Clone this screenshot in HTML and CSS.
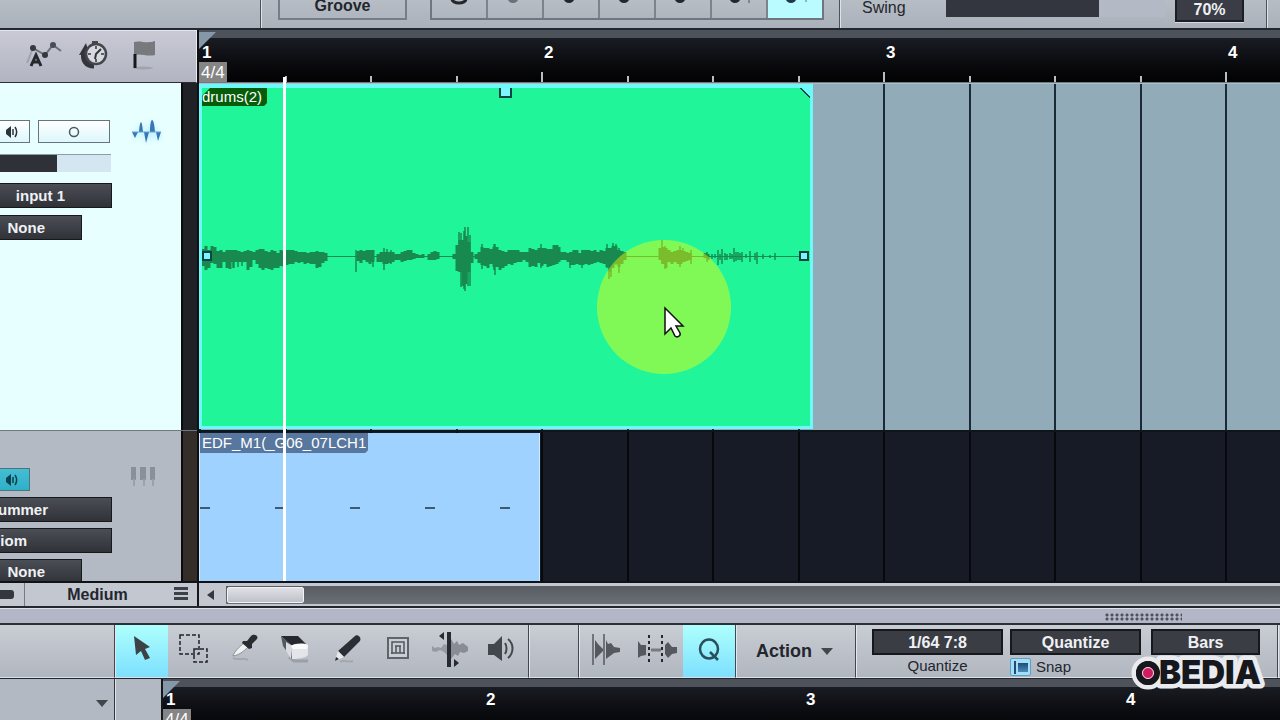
FILE: index.html
```html
<!DOCTYPE html>
<html lang="en">

<head>
    <meta charset="UTF-8" />
    <title>Arranger</title>
    <link rel="stylesheet" href="styles.css">
</head>

<body>

    <!-- Quantize bar -->
    <header class="topbar">
        <div class="top-section top-left"></div>
        <div class="top-section top-groove">
            <button class="groove-button">Groove</button>
            <div class="note-group">
                <button aria-label="Whole"><svg width="24" height="28" viewBox="0 0 24 28"><ellipse cx="12" cy="9" rx="7" ry="4" fill="none" stroke="#23262d" stroke-width="3" /></svg></button>
                <button aria-label="Half"><svg width="24" height="28" viewBox="0 0 24 28"><ellipse cx="10" cy="9" rx="5" ry="4" fill="#6b7078" /></svg></button>
                <button aria-label="Quarter"><svg width="24" height="28" viewBox="0 0 24 28"><ellipse cx="10" cy="9" rx="5" ry="4" fill="#23262d" /></svg></button>
                <button aria-label="Eighth"><svg width="24" height="28" viewBox="0 0 24 28"><ellipse cx="9" cy="9" rx="5" ry="4" fill="#23262d" /></svg></button>
                <button aria-label="Sixteenth"><svg width="24" height="28" viewBox="0 0 24 28"><ellipse cx="9" cy="9" rx="5" ry="4" fill="#23262d" /></svg></button>
                <button aria-label="Thirty-second"><svg width="24" height="28" viewBox="0 0 24 28"><ellipse cx="8" cy="9" rx="5" ry="4" fill="#23262d" /><path d="M22 6V13" stroke="#80858e" stroke-width="2" /></svg></button>
                <button class="active" aria-label="Sixty-fourth"><svg width="24" height="28" viewBox="0 0 24 28"><ellipse cx="8" cy="9" rx="5" ry="4" fill="#1d3a48" /><path d="M23 6V12" stroke="#7fbcc6" stroke-width="2" /></svg></button>
            </div>
        </div>
        <div class="top-section top-swing">
            <label for="swing">Swing</label>
            <input class="slider swing-slider" id="swing" type="range" min="0" max="100" value="70">
            <button class="swing-value">70%</button>
        </div>
        <div class="top-section top-rest"></div>
    </header>

    <main class="arranger">

        <!-- Track list -->
        <section class="tracklist">
            <div class="tracklist-header">
                <button class="icon-button" aria-label="Automation">
                    <svg width="36" height="30" viewBox="0 0 36 30">
                        <path d="M7 8L19 15L27 5L35 11" fill="none" stroke="#6c6f77" stroke-width="2" />
                        <path d="M1 23L7 8" stroke="#a0a3ad" stroke-width="2" />
                        <circle cx="7" cy="8" r="3" fill="#35383e" /><circle cx="19" cy="15" r="3" fill="#35383e" /><circle cx="27" cy="5" r="3" fill="#4a4d54" />
                        <path d="M5 26L10 15L15 26M7 22H13" fill="none" stroke="#26282d" stroke-width="3" />
                    </svg>
                </button>
                <button class="icon-button" aria-label="Tempo">
                    <svg width="30" height="30" viewBox="0 0 30 30">
                        <path d="M16 26C8 26 4 20 6 12" fill="none" stroke="#33353a" stroke-width="5" />
                        <path d="M1 15L8 3L11 14Z" fill="#33353a" />
                        <rect x="14" y="1" width="6" height="3" fill="#44474d" />
                        <circle cx="18" cy="14" r="10" fill="#d6d9df" stroke="#44464c" stroke-width="2.500" />
                        <path d="M18 6V9M18 19V22M10 14H13M23 14H26" stroke="#33353a" stroke-width="1.500" fill="none" />
                        <path d="M23 9L18 14L17 19" stroke="#33353a" stroke-width="2" fill="none" />
                    </svg>
                </button>
                <button class="icon-button" aria-label="Marker">
                    <svg width="28" height="32" viewBox="0 0 28 32">
                        <ellipse cx="13" cy="29" rx="10" ry="1.500" fill="#a0a3ad" />
                        <path d="M4 3C10 1 17 5 25 2V16C17 18 11 14 4 16Z" fill="#77797d" />
                        <path d="M5 15V29" stroke="#17181b" stroke-width="3" />
                    </svg>
                </button>
            </div>

            <div class="track track-audio selected">
                <div class="track-controls">
                    <div class="track-row">
                        <button class="mini monitor" aria-label="Monitor">
                            <svg width="14" height="12" viewBox="0 0 14 12"><path d="M1 4L6 0V12L1 8Z" fill="#2b3338" /><path d="M8 3V9M10 1C12 4 12 8 10 11" fill="none" stroke="#2b3338" stroke-width="1.500" /></svg>
                        </button>
                        <button class="mini channel-mode" aria-label="Mono">
                            <svg width="12" height="12" viewBox="0 0 12 12"><circle cx="6" cy="6" r="4.500" fill="none" stroke="#4b575c" stroke-width="1.500" /></svg>
                        </button>
                        <svg class="track-icon" width="32" height="28" viewBox="0 0 32 28">
                            <path class="glow" d="M1 15H7L10 5L13 15L15 23L20 2L24 15H30L27 23L22 13L16 25L10 13L4 21Z" />
                            <path d="M1 14H7L4 20ZM8 14C9 1 11 1 12 14ZM13 14H18L15 25ZM19 14C19 -2 23 -2 24 14ZM25 14H30L27 23Z" fill="#3977b4" />
                            <path d="M1 14H30" stroke="#6ba6d4" stroke-width="1" />
                        </svg>
                    </div>
                    <input class="slider track-fader" type="range" aria-label="Volume" min="0" max="100" value="51">
                    <button class="field field-input">input 1</button>
                    <button class="field field-short">None</button>
                </div>
                <div class="meter"></div>
            </div>

            <div class="track track-instrument">
                <div class="track-controls">
                    <div class="track-row">
                        <button class="mini monitor on" aria-label="Monitor">
                            <svg width="14" height="12" viewBox="0 0 14 12"><path d="M1 4L6 0V12L1 8Z" fill="#0c414e" /><path d="M8 3V9M10 1C12 4 12 8 10 11" fill="none" stroke="#0c414e" stroke-width="1.500" /></svg>
                        </button>
                        <svg class="track-icon keys-icon" width="28" height="28" viewBox="0 0 28 28">
                            <path d="M1 1H6V14H1ZM10 1H16V14H10ZM20 1H25V14H20Z" fill="#8b9098" />
                            <path d="M4 13V20M14 13V20M23 13V20" stroke="#9da2aa" stroke-width="2" />
                        </svg>
                    </div>
                    <button class="field field-drummer">ummer</button>
                    <button class="field field-sound">iom</button>
                    <button class="field field-short">None</button>
                </div>
                <div class="meter"></div>
            </div>
        </section>

        <!-- Timeline -->
        <section class="timeline">
            <div class="ruler">
                <div class="bar"><span>1</span><i></i><i></i><i></i><i></i></div>
                <div class="bar"><span>2</span><i></i><i></i><i></i><i></i></div>
                <div class="bar"><span>3</span><i></i><i></i><i></i><i></i></div>
                <div class="bar"><span>4</span><i></i><i></i><i></i><i></i></div>
                <div class="song-start"></div>
                <div class="signature">4/4</div>
            </div>

            <div class="lane lane-audio">
                <div class="grid-bar"><i></i><i></i><i></i><i></i></div>
                <div class="grid-bar"><i></i><i></i><i></i><i></i></div>
                <div class="grid-bar"><i></i><i></i><i></i><i></i></div>
                <div class="grid-bar"><i></i><i></i><i></i><i></i></div>
                <div class="clip clip-drums">
                    <div class="clip-name">drums(2)</div>
                    <svg class="waveform" width="607" height="70" viewBox="202 222 607 70">
                        <path d="M202 256.500H809" stroke-width="1" />
                        <path stroke-width="3" d="M203 249V266M206 246V270M209 250V268M212 246V263M215 247V264M218 251V268M221 250V268M224 252V262M227 250V268M230 250V269M233 250V262M236 250V262M239 251V262M242 252V262M245 251V262M248 250V270M251 251V267M254 252V260M257 250V264M260 249V268M263 249V270M266 251V268M269 252V269M272 250V270M275 251V268M278 253V268M281 250V266M284 251V267M287 250V265M290 250V264M293 250V264M296 251V262M299 252V263M302 252V262M305 252V264M308 253V263M311 252V264M314 252V264M317 251V268M320 252V267M323 252V263M326 253V261M358 251V261M361 250V263M364 251V260M367 250V262M370 250V264M373 250V262M378 254V262M381 252V262M384 252V264M387 252V264M390 252V263M393 252V262M396 254V260M399 254V260M402 252V262M405 251V261M408 250V260M411 250V260M414 253V259M417 254V258M420 255V258M423 254V258M429 254V260M432 252V260M435 251V260M438 252V259M454 254V259M457 245V271M460 240V272M463 240V286M466 236V284M469 242V272M472 252V263M476 254V259M479 252V263M482 247V265M485 248V266M488 248V268M491 249V264M494 247V267M497 247V267M500 250V270M503 251V268M506 252V266M509 250V264M512 250V265M515 250V263M518 250V262M521 252V262M524 252V260M527 252V262M530 248V267M533 249V266M536 250V267M539 248V263M542 248V266M545 248V264M548 249V267M551 249V266M554 245V265M557 245V264M559 247V262M562 252V260M565 252V260M568 253V262M571 252V265M574 250V265M577 250V264M580 253V265M583 250V265M586 250V264M589 250V265M592 251V264M595 250V263M598 252V262M601 250V263M604 251V264M607 248V267M610 248V272M613 246V268M616 246V264M619 250V267M622 251V264M625 252V260M660 248V260M663 247V264M666 248V268M669 250V262M672 252V264M675 251V262M678 250V264M681 250V264M684 251V262M687 252V261M690 253V260M705 253V258M708 254V260" />
                        <path stroke-width="1.500" d="M234 256V268M238 256V267M242 256V266M233 250V268M356 250V272M373 250V267M384 248V270M387 249V264M391 250V264M459 232V272M461 233V287M464 231V289M465 227V291M468 227V286M470 235V286M482 244V269M494 244V270M495 244V275M541 244V268M570 252V268M582 250V268M607 244V268M609 248V279M611 248V277M613 243V268M616 244V265M619 248V273M662 240V264M665 246V269M680 246V267M683 248V262M691 250V264M707 252V262M718 250V265M720 254V260M722 249V264M725 253V260M727 254V260M730 253V259M732 254V259M734 248V262M736 252V261M738 252V260M740 253V260M742 252V262M746 254V258M750 251V262M755 253V260M757 252V264M763 254V259M770 255V258M775 253V260M712 254V259M715 254V258" />
                    </svg>
                    <i class="handle handle-top"></i>
                    <i class="handle handle-left"></i>
                    <i class="handle handle-right"></i>
                    <i class="fade"></i>
                </div>
            </div>

            <div class="lane lane-instrument">
                <div class="grid-bar"><i></i><i></i><i></i><i></i></div>
                <div class="grid-bar"><i></i><i></i><i></i><i></i></div>
                <div class="grid-bar"><i></i><i></i><i></i><i></i></div>
                <div class="grid-bar"><i></i><i></i><i></i><i></i></div>
                <div class="clip clip-midi">
                    <div class="clip-name">EDF_M1(_G06_07LCH1</div>
                    <div class="midi-notes"><i></i><i></i><i></i><i></i><i></i></div>
                </div>
            </div>

            <div class="playhead"></div>
            <div class="click-spot"></div>
            <svg class="cursor" width="22" height="34" viewBox="0 0 22 34"><path d="M2 2V28L8 22L12 30C14 32 18 30 17 27L13 20H20Z" fill="#fff" stroke="#111" stroke-width="1.500" /></svg>
        </section>
    </main>

    <!-- Track size + horizontal scroll -->
    <div class="scrollrow">
        <div class="track-size">
            <div class="zoom-pill"><i></i></div>
            <button class="size-button">Medium</button>
            <button class="menu-button" aria-label="Track menu"><i></i><i></i><i></i></button>
        </div>
        <div class="scroll">
            <button class="scroll-left" aria-label="Scroll left"></button>
            <div class="scroll-track"><div class="scroll-thumb"></div></div>
        </div>
    </div>

    <div class="splitter"><div class="grip"></div></div>

    <!-- Editor toolbar -->
    <div class="toolbar">
        <div class="tool-section tools-left"></div>
        <div class="tool-section tools-main">
            <button class="tool active" aria-label="Arrow">
                <svg width="32" height="32" viewBox="0 0 32 32"><path d="M8 3L24 14L19 16L24 25L19 27L15 18L10 22Z" fill="#3d4244" /></svg>
            </button>
            <button class="tool" aria-label="Range">
                <svg width="32" height="32" viewBox="0 0 32 32"><path d="M3 2H22V21H3ZM17 16H30V29H17Z" fill="none" stroke="#202329" stroke-width="1.500" stroke-dasharray="4 2" /></svg>
            </button>
            <button class="tool" aria-label="Split">
                <svg width="32" height="32" viewBox="0 0 32 32"><path d="M4 25C9 28 14 24 19 27" stroke="#a2a7af" stroke-width="2" fill="none" /><path d="M4 23C5 19 10 14 15 10L19 14C14 19 10 22 4 23Z" fill="#f1f2f4" stroke="#8b9097" /><path d="M14 8L18 8L22 3C25 0 30 3 28 6L23 11L23 15L20 16L13 10Z" fill="#292c31" /></svg>
            </button>
            <button class="tool" aria-label="Eraser">
                <svg width="32" height="32" viewBox="0 0 32 32"><path d="M9 24L14 28H28" stroke="#9b9fa8" stroke-width="3" fill="none" /><path d="M1 3H18L27 12H11Z" fill="#25282d" /><path d="M1 3L11 12L12 26L3 13Z" fill="#55595f" /><path d="M6 9L11 12V26L6 18Z" fill="#d8dbe0" /><path d="M11 13C15 11 24 10 28 12V22C26 25 17 26 12 26Z" fill="#e2e5e9" /><path d="M11 13C15 10 24 10 28 12L27 16H13Z" fill="#fafafa" /></svg>
            </button>
            <button class="tool" aria-label="Paint">
                <svg width="32" height="32" viewBox="0 0 32 32"><path d="M8 29C12 26 16 30 21 28" stroke="#a2a7af" stroke-width="2" fill="none" /><path d="M23 3C25 1 30 4 28 8L12 24L6 18Z" fill="#2b2e34" /><path d="M6 18L12 24L3 28Z" fill="#e9eaec" /><path d="M3 28L4 24L7 26Z" fill="#25282d" /></svg>
            </button>
            <button class="tool" aria-label="Mute">
                <svg width="32" height="32" viewBox="0 0 32 32"><path d="M5 5H25V25H5Z" fill="#c9cdd4" stroke="#5f636b" stroke-width="2" /><path d="M9 21V9H21V21M13 20V13M17 20V13M8 20H22M12 13H18" fill="none" stroke="#52565e" stroke-width="1.500" /></svg>
            </button>
            <button class="tool" aria-label="Bend">
                <svg width="40" height="38" viewBox="0 0 40 38"><path d="M1 16L4 18L7 17L10 18L13 14L16 15V25L13 22L9 20L5 22L1 21Z" fill="#969aa2" /><path d="M20 9L23 14L26 11L28 15L32 13L37 17V21L33 23L29 22L27 26L24 24L20 29Z" fill="#888c95" /><path d="M18 2V37" stroke="#272a30" stroke-width="4" /><path d="M13 2V10L8 6ZM23 29V37L28 33Z" fill="#272a30" /></svg>
            </button>
            <button class="tool" aria-label="Listen">
                <svg width="32" height="32" viewBox="0 0 32 32"><path d="M2 11H8L16 3V28L8 22H2Z" fill="#42464d" /><path d="M19 10C21 13 21 18 19 21M22 6C28 11 28 20 22 25" stroke="#42464d" stroke-width="2" fill="none" /></svg>
            </button>
        </div>
        <div class="tool-section tools-gap"></div>
        <div class="tool-section tools-edit">
            <button class="tool" aria-label="Transients">
                <svg width="32" height="34" viewBox="0 0 32 34"><path d="M3 2V33M14 2V33" stroke="#55595f" stroke-width="1.500" /><path d="M5 8L8 12L13 17V19L9 23L5 27ZM16 8L18 12L21 11L24 15L30 16V20L24 21L20 24L16 27Z" fill="#55595f" /></svg>
            </button>
            <button class="tool" aria-label="Slice">
                <svg width="42" height="34" viewBox="0 0 42 34"><path d="M1 9L4 13L9 13V23L4 24L1 26ZM28 13L31 10L35 15H40V21L35 22L31 26L28 22Z" fill="#55595f" /><path d="M14 18H24" stroke="#767a82" stroke-width="3" /><path d="M12 3V33M25 3V33" stroke="#24272b" stroke-width="2" stroke-dasharray="3 3" /></svg>
            </button>
            <button class="tool active" aria-label="Quantize panel">
                <svg width="28" height="28" viewBox="0 0 28 28"><ellipse cx="14" cy="14" rx="9" ry="9.500" fill="none" stroke="#284f5c" stroke-width="2.500" /><path d="M15 17L23 25" stroke="#284f5c" stroke-width="2.500" /></svg>
            </button>
        </div>
        <div class="tool-section tools-action">
            <button class="action-button">Action <i class="arrow-down"></i></button>
        </div>
        <div class="tool-section tools-quantize">
            <div class="param">
                <button class="field" id="quantize-value">1/64 7:8</button>
                <label for="quantize-value">Quantize</label>
            </div>
            <div class="param">
                <button class="field">Quantize</button>
                <label class="snap"><input type="checkbox" checked>Snap</label>
            </div>
            <div class="param param-bars">
                <button class="field" id="timebase">Bars</button>
                <label for="timebase">Timebase</label>
            </div>
            <svg class="logo" width="144" height="40" viewBox="0 0 144 40">
                <g class="logo-back">
                    <circle cx="20" cy="20" r="12" />
                    <text x="31" y="31">BEDIA</text>
                </g>
                <circle cx="20" cy="20" r="9" fill="#cf1c63" stroke="#17181d" stroke-width="6" />
                <circle cx="20" cy="20" r="5.500" fill="none" stroke="#f3dfe8" stroke-width="1" />
            </svg>
        </div>
        <div class="tool-section tools-rest"></div>
    </div>

    <!-- Editor -->
    <div class="editor">
        <div class="editor-head"><i class="arrow-down"></i></div>
        <div class="editor-keys"></div>
        <div class="ruler editor-ruler">
            <div class="bar"><span>1</span></div>
            <div class="bar"><span>2</span></div>
            <div class="bar"><span>3</span></div>
            <div class="bar"><span>4</span></div>
            <div class="song-start"></div>
            <div class="signature">4/4</div>
        </div>
    </div>

</body>

</html>
```
FILE: styles.css
```css
* {
    box-sizing: border-box;
}

body {
    margin: 0;
    height: 100vh;
    overflow: hidden;
    display: flex;
    flex-direction: column;
    background: #b3b9c2;
    color: #23262d;
    font-family: "Liberation Sans", Arial, sans-serif;
    font-size: 16px;
}

button {
    font: inherit;
    color: inherit;
    padding: 0;
    margin: 0;
    border: none;
    background: none;
    display: flex;
    align-items: center;
    justify-content: center;
    flex: none;
}

svg {
    display: block;
    flex: none;
}

/* Quantize bar */
.topbar {
    display: flex;
    flex: none;
    height: 30px;
    overflow: hidden;
    background: linear-gradient(#b7bdc5, #abb1ba);
    border-bottom: 2px solid #23282e;
}

.top-section {
    display: flex;
    align-items: flex-end;
    flex: none;
    padding-bottom: 8px;
    border-right: 1px solid #4d5259;
    box-shadow: 1px 0 0 #dfe3e8;
}

.top-left {
    width: 261px;
}

.top-groove {
    width: 579px;
    padding-left: 17px;
    gap: 23px;
}

.groove-button {
    width: 129px;
    height: 28px;
    border: 2px solid #777c85;
    font-weight: bold;
}

.note-group {
    display: flex;
    border: 2px solid #70757e;
}

.note-group button {
    width: 56px;
    height: 28px;
    border-right: 2px solid #7d828b;
}

.note-group button:last-child {
    width: 54px;
    border-right: none;
}

.note-group .active {
    background: #b9fbff;
}

.top-swing {
    width: 427px;
    padding-left: 22px;
}

.top-swing label {
    width: 84px;
    line-height: 24px;
}

.slider {
    appearance: none;
    margin: 0;
    border-radius: 0;
    flex: none;
}

.slider::-webkit-slider-thumb {
    appearance: none;
    width: 1px;
    height: 1px;
    opacity: 0;
}

.swing-slider {
    width: 219px;
    height: 28px;
    margin-bottom: 3px;
    background: linear-gradient(90deg, #33363e 70%, #b3bac5 70%);
}

.swing-value {
    width: 69px;
    height: 24px;
    margin-left: 10px;
    margin-bottom: -2px;
    border: 2px solid #1c1e23;
    box-shadow: 0 1px 0 #d7dbe0;
    background: #3a3d45;
    color: #eef0f3;
    font-weight: bold;
}

.top-rest {
    flex: 1;
    border-right: none;
}

/* Arranger */
.arranger {
    display: flex;
    flex: none;
}

.tracklist {
    flex: none;
    width: 199px;
    border-right: 2px solid #0d0f13;
}

.tracklist-header {
    display: flex;
    align-items: center;
    height: 53px;
    padding: 0 0 4px 26px;
    gap: 16px;
    background: linear-gradient(#c9cad6, #b2b4c1);
    border-top: 1px solid #e3e6ec;
    border-bottom: 1px solid #2a2e34;
    border-right: 1px solid #e9ebf0;
}

.icon-button:last-child {
    margin-left: 6px;
}

.track {
    display: flex;
    overflow: hidden;
}

.track-audio {
    height: 347px;
    background: #e8ffff;
}

.track-instrument {
    height: 151px;
    background: #b3bac3;
    border-top: 1px solid #71777f;
}

.track-controls {
    flex: 1;
    display: flex;
    flex-direction: column;
    align-items: flex-start;
    gap: 7px;
    padding-top: 37px;
}

.track-instrument .track-controls {
    gap: 6px;
}

.meter {
    flex: none;
    width: 16px;
    background: #202127;
    border-left: 2px solid #0a0b0e;
}

.track-instrument .meter {
    background: #352d28;
}

.track-row {
    display: flex;
    align-items: center;
    height: 23px;
}

.mini {
    height: 23px;
    border: 1px solid #66757b;
    background: linear-gradient(#fff, #dcf7fc);
}

.monitor {
    width: 30px;
    padding-right: 5px;
    border-left: none;
}

.monitor.on {
    background: linear-gradient(#45bdd2, #2fb0c8);
    border-color: #4a7580;
}

.channel-mode {
    width: 72px;
    margin-left: 8px;
}

.track-icon {
    margin-left: 21px;
}

.keys-icon {
    margin-left: 100px;
}

.glow {
    fill: #a6e6ff;
    filter: blur(3px);
}

.track-fader {
    width: 111px;
    height: 18px;
    margin: 4px 0;
    border-top: 1px solid #8e9ca3;
    background: linear-gradient(90deg, #2e3138 51%, #d4e6f2 51%);
}

.field {
    height: 25px;
    border: 1px solid #17181c;
    background: linear-gradient(#4a4e55, #303238);
    color: #f0f1f4;
    font-size: 15px;
    font-weight: bold;
}

.track .field {
    width: 112px;
    border-left: none;
    justify-content: flex-end;
}

.track .field-input {
    padding-right: 46px;
}

.track .field-short {
    width: 82px;
    padding-right: 36px;
}

.track .field-drummer {
    padding-right: 63px;
}

.track .field-sound {
    padding-right: 84px;
}

/* Timeline */
.timeline {
    flex: 1;
    min-width: 0;
    position: relative;
    overflow: hidden;
}

.ruler {
    display: flex;
    position: relative;
    height: 53px;
    overflow: hidden;
    background: linear-gradient(#4d525b 8px, #191c23 8px, #0b0c10 32px, #020203);
    border-bottom: 1px solid #6d7a82;
}

.bar {
    flex: none;
    width: 342px;
    display: flex;
    align-items: flex-end;
    position: relative;
}

.bar span {
    position: absolute;
    left: 3px;
    top: 14px;
    line-height: 18px;
    font-size: 17px;
    font-weight: bold;
    color: #fff;
    z-index: 1;
}

.bar i {
    flex: 1;
    height: 6px;
    border-left: 2px solid #b9bcc0;
}

.bar i:first-of-type {
    height: 10px;
}

.song-start {
    position: absolute;
    left: 0;
    top: 2px;
    width: 17px;
    height: 17px;
    background: #8697a8;
    clip-path: polygon(0 0, 100% 0, 0 100%);
}

.signature {
    position: absolute;
    left: 0;
    bottom: 0;
    padding: 0 2px;
    width: 28px;
    height: 20px;
    line-height: 22px;
    font-size: 17px;
    color: #fff;
    background: #858585;
}

.lane {
    display: flex;
    position: relative;
    overflow: hidden;
}

.lane-audio {
    height: 347px;
    background: #92abb8;
    border-top: 1px solid #a9c0cb;
}

.lane-instrument {
    height: 151px;
    background: #171b25;
    border-top: 2px solid #10151b;
}

.grid-bar {
    flex: none;
    width: 342px;
    display: flex;
}

.grid-bar i {
    flex: 1;
    border-left: 2px solid #1c2a35;
}

.lane-instrument .grid-bar i {
    border-color: #07080c;
}

.clip {
    position: absolute;
    left: 0;
}

.clip-drums {
    top: 0;
    width: 614px;
    height: 345px;
    border: 3px solid #6df8fa;
    border-top-width: 4px;
    background: #20f59a;
}

.clip-midi {
    top: 1px;
    bottom: 0;
    width: 341px;
    border-left: 1px solid #cfeaff;
    border-right: 1px solid #cfeaff;
    background: #9fd2ff;
}

.clip-name {
    width: max-content;
    line-height: 18px;
    font-size: 15px;
    color: #fff;
}

.clip-drums .clip-name {
    padding-right: 5px;
    background: #065c08;
    clip-path: polygon(8px 0, 100% 0, 100% 15px, calc(100% - 3px) 100%, 0 100%, 0 8px);
}

.clip-midi .clip-name {
    padding: 0 2px;
    line-height: 20px;
    background: #58779f;
    clip-path: polygon(0 0, 100% 0, 100% 17px, calc(100% - 3px) 100%, 0 100%);
}

.waveform {
    position: absolute;
    left: 0;
    top: 134px;
    stroke: #188a50;
    fill: none;
}

.handle {
    position: absolute;
    width: 10px;
    height: 10px;
    border: 2px solid #08463f;
    background: #7df5ff;
}

.handle-top {
    left: 297px;
    top: 0;
    width: 13px;
    border-top: none;
}

.handle-left {
    left: 0;
    top: 163px;
}

.handle-right {
    right: 1px;
    top: 163px;
}

.fade {
    position: absolute;
    right: 0;
    top: 0;
    width: 10px;
    height: 10px;
    background: linear-gradient(45deg, transparent 46%, #08463f 46%, #08463f 56%, #6df8fa 56%);
}

.midi-notes {
    display: flex;
    gap: 65px;
    padding-top: 54px;
}

.midi-notes i {
    width: 10px;
    height: 2px;
    background: #3c5a70;
}

.playhead {
    position: absolute;
    left: 84px;
    top: 47px;
    bottom: 0;
    width: 3px;
    background: #fff;
}

.click-spot {
    position: absolute;
    left: 398px;
    top: 210px;
    width: 134px;
    height: 134px;
    border-radius: 50%;
    background: rgba(255, 255, 0, .43);
}

.cursor {
    position: absolute;
    left: 464px;
    top: 276px;
}

/* Track size + scroll */
.scrollrow {
    display: flex;
    flex: none;
    height: 27px;
    border-top: 2px solid #101216;
    border-bottom: 2px solid #24282e;
    background: #c3c7d0;
}

.track-size {
    display: flex;
    flex: none;
    width: 199px;
    border-right: 2px solid #15171b;
}

.zoom-pill {
    display: flex;
    align-items: center;
    width: 25px;
    border-right: 1px solid #767b84;
}

.zoom-pill i {
    width: 14px;
    height: 9px;
    background: #34373d;
    border-radius: 0 3px 3px 0;
}

.size-button {
    flex: 1;
    padding-right: 4px;
    font-weight: bold;
}

.menu-button {
    width: 14px;
    margin-right: 9px;
    margin-bottom: 3px;
    flex-direction: column;
    gap: 2px;
}

.menu-button i {
    width: 14px;
    height: 3px;
    background: #3c4047;
}

.scroll {
    flex: 1;
    display: flex;
    align-items: center;
    padding-left: 8px;
}

.scroll-left {
    width: 19px;
    height: 12px;
}

.scroll-left::before {
    content: "";
    margin-right: 12px;
    border: 5px solid transparent;
    border-right: 7px solid #34373d;
    border-left: none;
}

.scroll-track {
    flex: 1;
    height: 18px;
    padding: 1px;
    background: linear-gradient(#575b62, #6a6e75);
}

.scroll-thumb {
    width: 77px;
    height: 16px;
    border: 1px solid #f3f4f6;
    border-radius: 2px;
    background: linear-gradient(#dfe1e6, #bfc1c9);
}

.splitter {
    display: flex;
    justify-content: flex-end;
    flex: none;
    height: 17px;
    padding: 4px 98px 0 0;
    border-top: 1px solid #dde0e8;
    border-bottom: 2px solid #2b2f36;
    background: #b2b6c7;
}

.grip {
    width: 77px;
    height: 8px;
    background: radial-gradient(circle at 2px 2px, #4e525c 1px, transparent 2px) 0 0 / 5px 4px;
}

/* Editor toolbar */
.toolbar {
    display: flex;
    flex: none;
    height: 54px;
    background: linear-gradient(#c9cdd4, #b0b6bf);
    border-bottom: 1px solid #23272d;
}

.tool-section {
    display: flex;
    flex: none;
    border-left: 1px solid #e4e7eb;
    border-right: 1px solid #42474e;
    border-bottom: 1px solid #dde1e5;
}

.tools-left {
    width: 115px;
    border-left: none;
}

.tools-main {
    width: 414px;
}

.tools-gap {
    width: 50px;
}

.tools-edit {
    width: 157px;
}

.tools-action {
    width: 120px;
}

.tool {
    flex: 1;
    padding-bottom: 4px;
}

.tool.active {
    background: linear-gradient(#adfffc, #7de0ff);
}

.action-button {
    flex: 1;
    gap: 9px;
    padding-right: 3px;
    font-size: 18px;
    font-weight: bold;
}

.arrow-down {
    border: 6px solid transparent;
    border-top: 7px solid #43474a;
    border-bottom: none;
}

.tools-quantize {
    position: relative;
    width: 422px;
    padding: 4px 0 0 15px;
    gap: 7px;
}

.param {
    width: 131px;
    text-align: center;
    font-size: 15px;
}

.param .field {
    width: 100%;
    height: 26px;
    padding-top: 1px;
    border-width: 2px;
    background: #3a3d44;
    font-size: 16px;
}

.param label {
    display: block;
    line-height: 21px;
}

.param-bars {
    width: 109px;
    margin-left: 3px;
}

.param .snap {
    display: flex;
    align-items: center;
    gap: 5px;
    line-height: 24px;
}

.snap input {
    appearance: none;
    margin: 0;
    width: 21px;
    height: 18px;
    border: 1px solid #5ba1c6;
    border-radius: 2px;
    background:
        linear-gradient(#1d4c76, #1d4c76) 3px 2px / 2px 13px no-repeat,
        linear-gradient(#1d4c76, #4d8bb8) 7px 4px / 10px 9px no-repeat,
        #a5dcf6;
}

.logo {
    position: absolute;
    left: 271px;
    top: 28px;
    z-index: 2;
}

.logo-back {
    fill: #17181d;
    stroke: #e9ebee;
    stroke-width: 9px;
    stroke-linejoin: round;
    paint-order: stroke;
}

.logo text {
    font-family: Inter, "Liberation Sans", sans-serif;
    font-size: 33px;
    font-weight: 900;
}

.tools-rest {
    flex: 1;
    border-right: none;
}

/* Editor */
.editor {
    display: flex;
    flex: 1;
    min-height: 0;
    overflow: hidden;
}

.editor-head {
    display: flex;
    justify-content: flex-end;
    width: 115px;
    padding: 21px 6px 0 0;
    border-right: 1px solid #33373d;
}

.editor-head .arrow-down {
    height: 7px;
}

.editor-keys {
    width: 48px;
    border-left: 1px solid #dfe2e6;
    border-right: 2px solid #15171b;
}

.editor-ruler {
    flex: 1;
}

.editor-ruler .bar {
    width: 320px;
}

.editor-ruler .bar span {
    top: 12px;
}

.editor-ruler .signature {
    bottom: 2px;
}
```
